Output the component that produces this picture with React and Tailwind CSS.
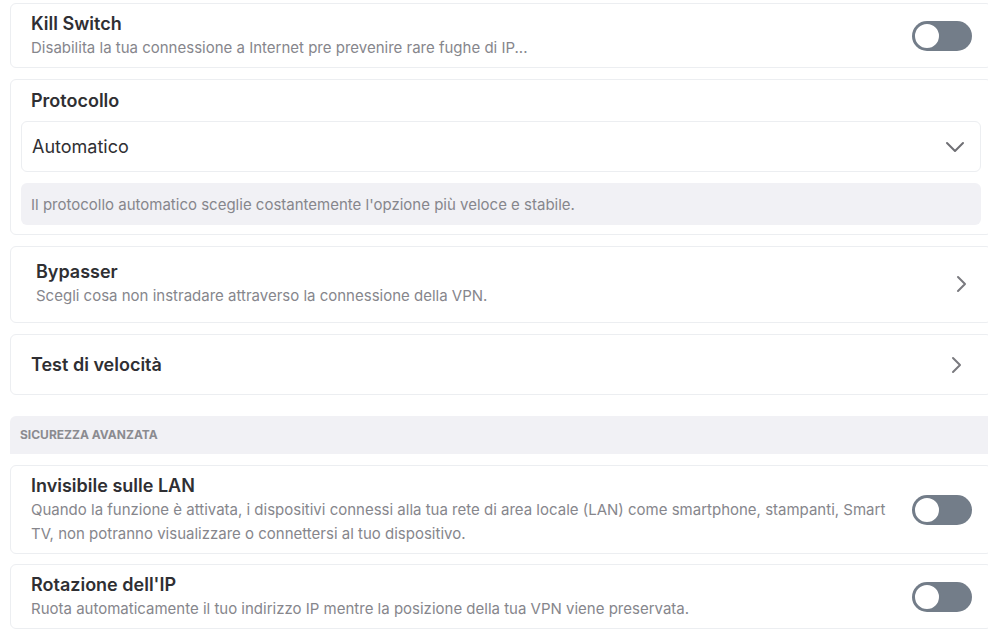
import React from "react";

function Toggle() {
  return (
    <div className="relative h-[30px] w-[60px] shrink-0 rounded-full bg-[#737d89]">
      <div className="absolute left-[1px] top-[1px] h-[28px] w-[28px] rounded-full border-2 border-[#737d89] bg-white" />
    </div>
  );
}

function ChevronRight() {
  return (
    <svg width="12" height="18" viewBox="0 0 12 18" fill="none" className="shrink-0">
      <path d="M2 2l7 7-7 7" stroke="#7a7a7f" strokeWidth="2" strokeLinecap="round" strokeLinejoin="round" />
    </svg>
  );
}

function ChevronDown() {
  return (
    <svg width="20" height="12" viewBox="0 0 20 12" fill="none" className="shrink-0">
      <path d="M2 2l8 8 8-8" stroke="#6f6f74" strokeWidth="2" strokeLinecap="round" strokeLinejoin="round" />
    </svg>
  );
}

function ToggleCard({ title, description }) {
  return (
    <div className="flex items-center gap-5 rounded-md border border-[#eceef1] bg-white pb-[7px] pl-5 pr-[19px] pt-2">
      <div className="flex-1 pr-1">
        <div className="text-[18px] font-semibold leading-6 text-[#2f2f33]">{title}</div>
        <div className="text-[15px] leading-6 text-[#86868c]">{description}</div>
      </div>
      <Toggle />
    </div>
  );
}

export default function App() {
  return (
    <div className="h-[629px] overflow-hidden bg-white" style={{ fontFamily: "Inter, 'Noto Sans', sans-serif" }}>
      <div className="ml-[10px] mt-[3px] flex w-[982px] flex-col">
        <ToggleCard
          title="Kill Switch"
          description="Disabilita la tua connessione a Internet pre prevenire rare fughe di IP..."
        />

        <div className="mt-[11px] rounded-md border border-[#eceef1] bg-white px-[10px] pb-[9px] pt-[9px]">
          <div className="px-[10px] text-[18px] font-semibold leading-6 text-[#2f2f33]">Protocollo</div>
          <div className="mt-[8px] flex h-[51px] items-center justify-between rounded-md border border-[#eceef1] pl-[10px] pr-[15px]">
            <span className="text-[18px] text-[#2f2f33]">Automatico</span>
            <ChevronDown />
          </div>
          <div className="mt-[11px] flex h-[42px] items-center rounded-md bg-[#f1f1f5] px-[10px] pt-[2px] text-[15px] text-[#86868c]">
            Il protocollo automatico sceglie costantemente l'opzione più veloce e stabile.
          </div>
        </div>

        <div className="mt-[11px] flex items-center justify-between rounded-md border border-[#eceef1] bg-white pb-[14px] pl-[25px] pr-[23px] pt-[13px]">
          <div>
            <div className="text-[18px] font-semibold leading-6 text-[#2f2f33]">Bypasser</div>
            <div className="text-[15px] leading-6 text-[#86868c]">
              Scegli cosa non instradare attraverso la connessione della VPN.
            </div>
          </div>
          <ChevronRight />
        </div>

        <div className="mt-[11px] flex h-[61px] items-center justify-between rounded-md border border-[#eceef1] bg-white pl-5 pr-[28px]">
          <div className="text-[18px] font-semibold leading-6 text-[#2f2f33]">Test di velocità</div>
          <ChevronRight />
        </div>

        <div className="mt-[21px] flex h-[38px] items-center rounded-tl-md bg-[#f1f1f5] px-[10px] text-[12px] font-bold uppercase text-[#8b8b90]">
          Sicurezza avanzata
        </div>

        <div className="mt-[11px] flex flex-col gap-[10px]">
          <ToggleCard
            title="Invisibile sulle LAN"
            description="Quando la funzione è attivata, i dispositivi connessi alla tua rete di area locale (LAN) come smartphone, stampanti, Smart TV, non potranno visualizzare o connettersi al tuo dispositivo."
          />
          <ToggleCard
            title="Rotazione dell'IP"
            description="Ruota automaticamente il tuo indirizzo IP mentre la posizione della tua VPN viene preservata."
          />
        </div>
      </div>
    </div>
  );
}
